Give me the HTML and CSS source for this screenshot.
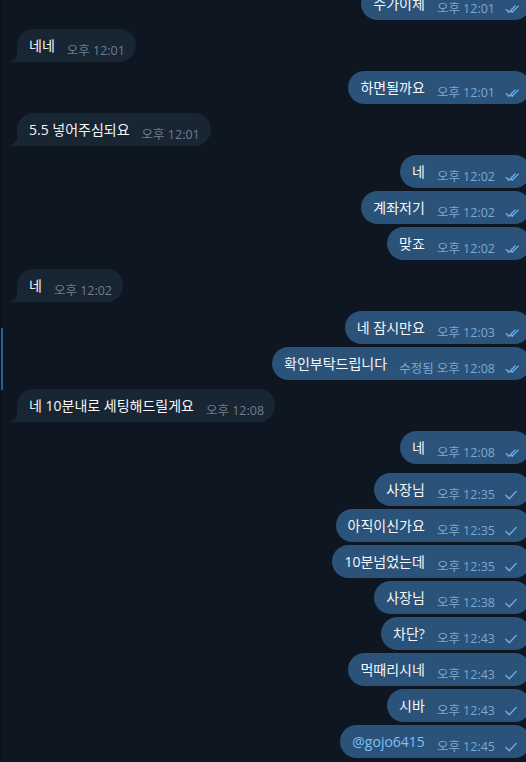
FILE: index.html
```html
<!DOCTYPE html>
<html lang="ko">
<head>
<meta charset="utf-8">
<link rel="stylesheet" href="styles.css">
</head>
<body>
<svg width="0" height="0" class="defs">
  <defs>
    <symbol id="dbl" viewBox="0 0 16 10">
      <path d="M1.3 5.6 L3.9 8.3 L10 2.1 M6.4 7.6 L7.1 8.3 L13.2 2.1" fill="none" stroke="currentColor" stroke-width="1.35" stroke-linecap="round" stroke-linejoin="round"/>
    </symbol>
    <symbol id="one" viewBox="0 0 16 10">
      <path d="M0.8 5.3 L4.3 8.8 L11.3 1.4" fill="none" stroke="currentColor" stroke-width="1.35" stroke-linecap="round" stroke-linejoin="round"/>
    </symbol>
  </defs>
</svg>
<div class="edge"></div>
<main class="chat">
  <div class="row out first"><div class="bubble"><span class="text">수가이체</span><span class="meta"><span class="time">오후 12:01</span><svg class="check"><use href="#dbl"/></svg></span></div></div>

  <div class="row in start"><div class="bubble"><span class="text">네네</span><span class="meta"><span class="time">오후 12:01</span></span></div></div>

  <div class="row out start"><div class="bubble"><span class="text">하면될까요</span><span class="meta"><span class="time">오후 12:01</span><svg class="check"><use href="#dbl"/></svg></span></div></div>

  <div class="row in start"><div class="bubble"><span class="text">5.5 넣어주심되요</span><span class="meta"><span class="time">오후 12:01</span></span></div></div>

  <div class="row out start"><div class="bubble"><span class="text">네</span><span class="meta"><span class="time">오후 12:02</span><svg class="check"><use href="#dbl"/></svg></span></div></div>
  <div class="row out"><div class="bubble"><span class="text">계좌저기</span><span class="meta"><span class="time">오후 12:02</span><svg class="check"><use href="#dbl"/></svg></span></div></div>
  <div class="row out"><div class="bubble"><span class="text">맞죠</span><span class="meta"><span class="time">오후 12:02</span><svg class="check"><use href="#dbl"/></svg></span></div></div>

  <div class="row in start"><div class="bubble"><span class="text">네</span><span class="meta"><span class="time">오후 12:02</span></span></div></div>

  <div class="row out start"><div class="bubble"><span class="text">네 잠시만요</span><span class="meta"><span class="time">오후 12:03</span><svg class="check"><use href="#dbl"/></svg></span></div></div>
  <div class="row out"><div class="bubble"><span class="text">확인부탁드립니다</span><span class="meta"><span class="time">수정됨 오후 12:08</span><svg class="check"><use href="#dbl"/></svg></span></div></div>

  <div class="row in start"><div class="bubble"><span class="text">네 10분내로 세팅해드릴게요</span><span class="meta"><span class="time">오후 12:08</span></span></div></div>

  <div class="row out start"><div class="bubble"><span class="text">네</span><span class="meta"><span class="time">오후 12:08</span><svg class="check"><use href="#dbl"/></svg></span></div></div>

  <div class="row out start"><div class="bubble"><span class="text">사장님</span><span class="meta"><span class="time">오후 12:35</span><svg class="check"><use href="#one"/></svg></span></div></div>
  <div class="row out"><div class="bubble"><span class="text">아직이신가요</span><span class="meta"><span class="time">오후 12:35</span><svg class="check"><use href="#one"/></svg></span></div></div>
  <div class="row out"><div class="bubble"><span class="text">10분넘었는데</span><span class="meta"><span class="time">오후 12:35</span><svg class="check"><use href="#one"/></svg></span></div></div>
  <div class="row out"><div class="bubble"><span class="text">사장님</span><span class="meta"><span class="time">오후 12:38</span><svg class="check"><use href="#one"/></svg></span></div></div>
  <div class="row out"><div class="bubble"><span class="text">차단?</span><span class="meta"><span class="time">오후 12:43</span><svg class="check"><use href="#one"/></svg></span></div></div>
  <div class="row out"><div class="bubble"><span class="text">먹때리시네</span><span class="meta"><span class="time">오후 12:43</span><svg class="check"><use href="#one"/></svg></span></div></div>
  <div class="row out"><div class="bubble"><span class="text">시바</span><span class="meta"><span class="time">오후 12:43</span><svg class="check"><use href="#one"/></svg></span></div></div>
  <div class="row out"><div class="bubble"><span class="text link">@gojo6415</span><span class="meta"><span class="time">오후 12:45</span><svg class="check"><use href="#one"/></svg></span></div></div>
</main>
</body>
</html>
```

FILE: styles.css
```css
html, body {
  margin: 0;
  padding: 0;
}
body {
  width: 526px;
  height: 762px;
  overflow: hidden;
  background: #0e1621;
  font-family: "Open Sans", "Noto Sans CJK KR", sans-serif;
  position: relative;
  border-left: 1px solid #0b121a;
  box-sizing: border-box;
}
.defs {
  position: absolute;
  width: 0;
  height: 0;
}
.edge {
  position: absolute;
  left: 0;
  top: 328px;
  width: 2px;
  height: 62px;
  background: #2b5f91;
}
.chat {
  display: flex;
  flex-direction: column;
}
.row {
  display: flex;
  margin-top: 3px;
}
.row.start {
  margin-top: 9px;
}
.row.first {
  margin-top: -13px;
}
.row.in {
  padding-left: 16px;
}
.row.out {
  justify-content: flex-end;
  margin-right: -5px;
}
.bubble {
  position: relative;
  display: flex;
  align-items: flex-end;
  height: 33px;
  box-sizing: border-box;
  padding: 6px 10px 0 12px;
  border-radius: 17px;
  white-space: nowrap;
}
.in .bubble {
  background: #182533;
  padding-right: 11px;
  border-bottom-left-radius: 0;
}
.in .bubble::before {
  content: "";
  position: absolute;
  left: -7px;
  bottom: 0;
  width: 8px;
  height: 12px;
  background: radial-gradient(8px 11px at 0 0, transparent 98%, #182533 100%);
}
.out .bubble {
  background: #2b5278;
}
.text {
  font-size: 14px;
  line-height: 21px;
  color: #f5f7fa;
  align-self: flex-start;
}
.text.link {
  color: #7cc0f7;
}
.meta {
  display: flex;
  align-items: center;
  margin-left: 12px;
  margin-bottom: 4px;
  height: 14px;
}
.time {
  font-size: 12.5px;
  line-height: 14px;
}
.in .time {
  color: #6d7f8f;
}
.out .time {
  color: #7da8d3;
}
.check {
  width: 16px;
  height: 10px;
  margin-left: 10px;
  color: #6ab3f3;
}
```
